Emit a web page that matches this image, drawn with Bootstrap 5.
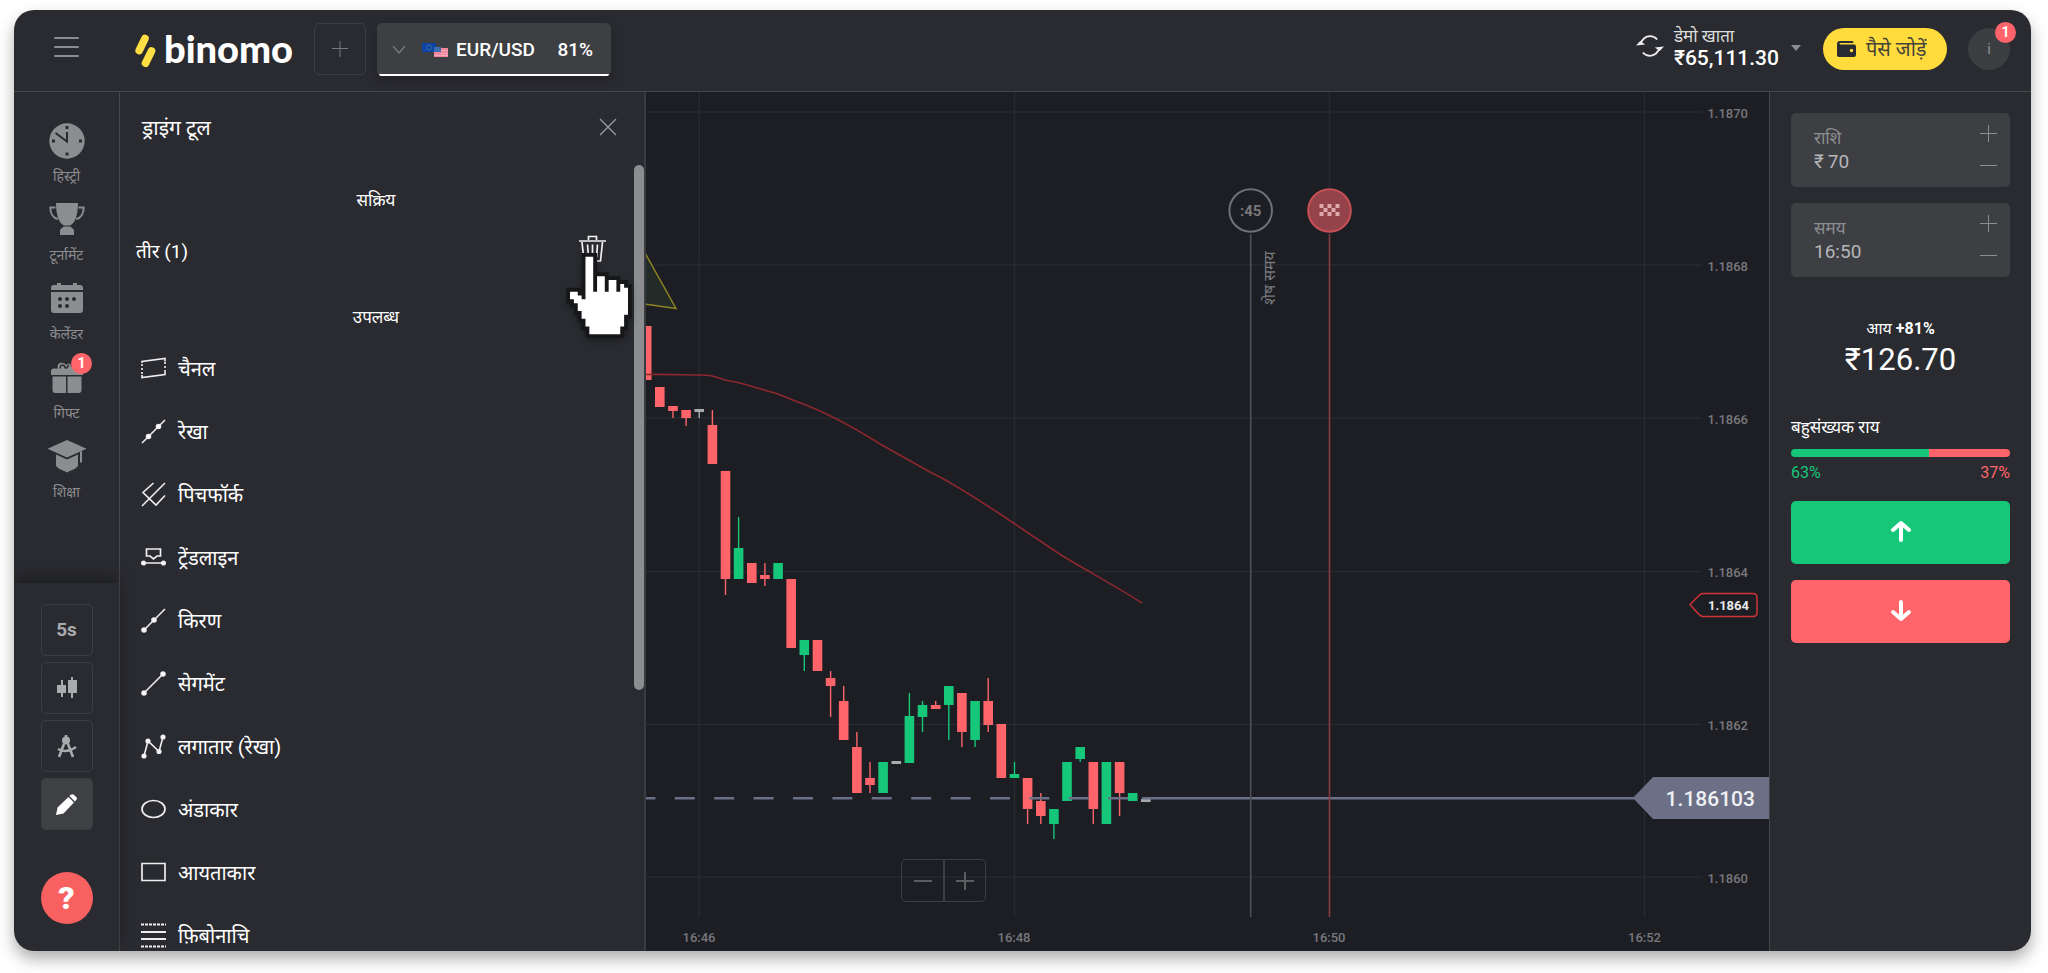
<!DOCTYPE html>
<html lang="hi" data-bs-theme="dark">
<head>
<meta charset="utf-8">
<meta name="viewport" content="width=device-width, initial-scale=1">
<title>Binomo</title>
<link href="https://cdn.jsdelivr.net/npm/bootstrap@5.3.0/dist/css/bootstrap.min.css" rel="stylesheet">
<style>
:root{--panel:#2a2b30;--chart:#1d1e23;--line:#46474b;--field:#3e3f43;--up:#16c77a;--down:#ff646a;--muted:#8c8d91}
body{background:#fff;padding:10px 17px 22px 14px;height:100vh;font-family:Roboto,"Noto Sans","Noto Sans Devanagari",sans-serif;font-size:18px;line-height:24px;color:#fff}
.terminal{height:100%;background:var(--panel);border-radius:20px;overflow:hidden}
.shell-shadow{height:100%;border-radius:20px;box-shadow:0 8px 16px rgba(0,0,0,.32)}
button{font-family:inherit;color:inherit;background:none;border:0;padding:0}
svg{display:block}
.topbar{height:82px;border-bottom:1px solid var(--line);padding:0 21px 0 0}
.rail{width:106px;border-right:1px solid var(--line)}
.menu-btn{width:105px;padding-top:26px;color:var(--muted)}
.wordmark{font-family:Lato,sans-serif;font-weight:900;font-size:38px;line-height:40px;padding:18px 0 0 8px;color:#fff;text-decoration:none}
.square-btn{width:52px;height:52px;border:1px solid #3d3e42;border-radius:5px}
.add-asset{margin:13px 11px 0 21px}
.asset-tab{width:234px;height:53px;margin-top:13px;background:var(--field);border-radius:5px;box-shadow:0 4px 12px rgba(0,0,0,.25);position:relative;font-size:19px;font-weight:500;padding:0 18px 0 15px}
.asset-tab::after{content:"";position:absolute;left:2px;right:2px;bottom:0;height:2px;background:#fff;border-radius:0 0 3px 3px}
.refresh{margin-top:24px}
.account{padding:16px 0 0 10px}
.account svg{margin:19px 22px 0 12px}
.account-name{font-size:17px;line-height:20px;color:#ddd}
.account-sum{font-size:21px;line-height:24px;font-weight:500}
.deposit{width:124px;height:42px;margin:18px 21px 0 0;padding-left:14px;gap:10px;border-radius:21px;background:#ffdb3c;color:#45433a;font-size:20px}
.avatar{width:42px;height:42px;margin-top:18px;border-radius:50%;background:#3d3e42;color:var(--muted);font-size:15px;position:relative}
.counter{position:absolute;width:21px;height:21px;border-radius:50%;background:var(--down);color:#fff;font-size:14px;line-height:21px;font-weight:700;text-align:center}
.avatar .counter{top:-6px;right:-6px}
.work-area{min-height:0}
.rail-link{color:var(--muted);text-decoration:none;height:79px;font-size:14px;line-height:18px;position:relative}
.rail-link svg{height:36px}
.rail-link .counter{top:-7px;left:57px}
.rail-menu{padding-top:31px}
.rail-tools{box-shadow:0 -6px 14px rgba(0,0,0,.3);padding-top:21px;height:368px;gap:6px;color:#aaabae}
.rail-tools .active{background:#3f4044;color:#fff}
.timeframe{font-size:19px;font-weight:700}
.help{width:52px;height:52px;border-radius:50%;background:#f96060;color:#fff;font-size:32px;font-weight:900;margin-top:36px}
.drawing{width:526px;border-right:2px solid #3a3b40;position:relative;overflow:hidden;flex:none}
.drawing h2{font-size:21px;line-height:24px;font-weight:400;margin:0}
.drawing h3{font-size:17px;line-height:24px;font-weight:400;text-align:center;margin:0;padding-right:12px}
.drawing-head{padding:24px 27px 0 22px;height:96px}
.close-btn{margin-top:2px}
.used-row{padding:0 38px 0 16px;height:80px;margin-bottom:13px;font-size:19px}
.trash-wrap{position:relative;margin-top:-6px}
.hand{position:absolute;left:-13px;top:18px;z-index:2;pointer-events:none;filter:drop-shadow(0 3px 3px rgba(0,0,0,.3))}
.tool-item{height:63px;padding-left:21px;gap:12px;font-size:20px;text-align:left}
.thumb{position:absolute;right:0;top:73px;width:10px;height:525px;border-radius:5px;background:var(--muted)}
.plot{background:var(--chart);position:relative;min-width:0}
.plot>svg{width:100%;height:100%}
.plot text{font-family:Roboto,"Noto Sans",sans-serif;fill:#77787c;font-size:13px;font-weight:500}
.plot .tag{fill:#e8e8ea;font-weight:700}
.plot .price{fill:#f0f0f4;font-size:21px}
.plot .left-time{font-size:16px;font-weight:400}
.plot .seconds{font-size:15px;font-weight:700}
.zoomer{position:absolute;left:255px;bottom:49px;border:1px solid #3d3e42;border-radius:5px;color:#5c5d61}
.zoomer button{width:41px;height:41px}
.zoomer button+button{width:42px;border-left:2px solid #3d3e42}
.deal{width:262px;border-left:1px solid var(--line);padding:21px 21px 0 21px;flex:none}
.field{height:74px;background:var(--field);border-radius:5px;padding:11px 13px 13px 23px;color:#b4b5b8}
.field label{display:block;margin-top:2px;font-size:17px;line-height:24px;color:var(--muted)}
.field input{width:110px;background:none;border:0;padding:0;outline:0;color:inherit;font-size:19px;line-height:24px;height:24px;display:block}
.field button{color:var(--muted);width:17px;height:18px}
.income{margin-top:40px;text-align:center;font-size:16px}
.income strong{font-weight:700}
.income .sum{font-size:31px;line-height:38px}
.opinion{margin-top:36px;font-size:17px}
.split-bar{height:8px;border-radius:4px;margin-top:10px;overflow:hidden}
.pct{font-size:16px;line-height:24px;margin-top:4px}
.deal .trade{height:63px;border-radius:5px;width:100%}
.trade+.trade,.pct+.trade{margin-top:16px}
.up-bg{background:var(--up)}.down-bg{background:var(--down)}
.up-fg{color:var(--up)}.down-fg{color:var(--down)}
</style>
</head>
<body>
<div class="shell-shadow">
<div class="terminal d-flex flex-column">
<header class="topbar d-flex align-items-start flex-shrink-0">
  <button class="menu-btn d-flex justify-content-center" aria-label="मेनू">
    <svg width="25" height="22" stroke="currentColor" stroke-width="2" stroke-linecap="round"><path d="M1 2h23M1 11h23M1 20h23"/></svg>
  </button>
  <a href="#" class="d-flex text-decoration-none ms-3" aria-label="binomo">
    <svg width="21" height="34" viewBox="0 0 21 34" class="mt-4" stroke="#ffdf43" stroke-width="7.6" stroke-linecap="round"><path d="M4.2 16.500L10 4.500M10.500 29.200L16.500 17"/></svg>
    <span class="wordmark">binomo</span>
  </a>
  <button class="square-btn add-asset d-flex align-items-center justify-content-center" aria-label="जोड़ें">
    <svg width="18" height="18" stroke="#77787c" stroke-width="1"><path d="M9 1v16M1 8.500h16"/></svg>
  </button>
  <button class="asset-tab d-flex align-items-center">
    <svg width="14" height="9" fill="none" stroke="#77787c" stroke-width="1.400"><path d="M1 1l6 7 6-7"/></svg>
    <svg width="26" height="14" class="ms-3"><path fill="#0b43a5" d="M0 0h14v9H0z"/><path fill="#f0879c" d="M12 5h14v9H12z"/><path stroke="#f6a9b8" d="M19 7.500h7M19 10.500h7M12 12.500h14"/><path fill="#3d6bb0" d="M12 4h7v5h-7z"/><circle cx="7" cy="4.500" r="2.500" fill="none" stroke="#3f6a9a"/></svg>
    <span class="ms-2">EUR/USD</span><span class="ms-auto">81%</span>
  </button>
  <div class="ms-auto d-flex align-items-start">
    <svg width="28" height="24" viewBox="0 0 28 24" class="refresh flex-shrink-0" fill="none" stroke="#ededee" stroke-width="1.800"><path d="M4.500 10.500C5.500 5.500 9.500 2.200 14 2.200c3 0 5.500 1.300 7.200 3.300M23.500 13.500C22.500 18.500 18.500 21.800 14 21.800c-3 0-5.500-1.300-7.200-3.300"/><path fill="#ededee" stroke="none" d="M0 11.500L4.200 7l5 3.500-4.600.6zM28 12.500L23.800 17l-5-3.500 4.600-.6z"/></svg>
    <button class="account d-flex text-start">
      <span><span class="account-name d-block">डेमो खाता</span><span class="account-sum d-block">₹65,111.30</span></span>
      <svg width="10" height="6" fill="#8c8d91"><path d="M0 0h10L5 6z"/></svg>
    </button>
    <button class="deposit d-flex align-items-center">
      <svg width="19" height="16" viewBox="0 0 19 16" fill="#2a2b30"><path d="M3 0h12q1.500 0 1.500 2H3.500q-1 0-1 .8t1 .8H17q2 0 2 2V14q0 2-2 2H2q-2 0-2-2V3Q0 0 3 0z"/><circle cx="14.500" cy="9.500" r="1.700" fill="#ffdb3c"/></svg>
      <span>पैसे जोड़ें</span>
    </button>
    <button class="avatar">i<span class="counter">1</span></button>
  </div>
</header>
<div class="work-area d-flex flex-fill">
  <nav class="rail d-flex flex-column flex-shrink-0 justify-content-between">
    <div class="rail-menu d-flex flex-column">
      <a href="#" class="rail-link d-flex flex-column align-items-center gap-2"><svg width="36" viewBox="0 0 36 36"><circle cx="18" cy="18" r="17.700" fill="#8c8d91"/><path d="M18 9v9.500L6.500 10" stroke="#2a2b30" stroke-width="2" fill="none"/><path fill="#2a2b30" d="M16.500 3h3v3h-3zM16.500 29.500h3v3h-3zM3 16.500h3v3H3zM30 16.500h3v3h-3z"/></svg>हिस्ट्री</a>
      <a href="#" class="rail-link d-flex flex-column align-items-center gap-2"><svg width="36" viewBox="0 0 36 36"><path fill="#8c8d91" d="M7 1h22c0 12-3 20.500-8 22.500h-6C10 21.500 7 13 7 1zM14.500 24.500h7c.5 1.500 3.500 1.500 3.500 5V33H11v-3.500c0-3.500 3-3.500 3.500-5z"/><path d="M6.500 5.500H1.300c0 6 3 10.500 7.500 11.500M29.500 5.500h5.200c0 6-3 10.500-7.500 11.500" fill="none" stroke="#8c8d91" stroke-width="2"/></svg>टूर्नामेंट</a>
      <a href="#" class="rail-link d-flex flex-column align-items-center gap-2"><svg width="36" viewBox="0 0 36 36"><path fill="#8c8d91" d="M5 4h3V2h4v2h12V2h4v2h3q3 0 3 3v2H2V7q0-3 3-3zM2 11h32v18q0 3-3 3H5q-3 0-3-3z"/><g fill="#2a2b30"><circle cx="11" cy="18" r="2"/><circle cx="18" cy="18" r="2"/><circle cx="25" cy="18" r="2"/><circle cx="11" cy="25" r="2"/><circle cx="18" cy="25" r="2"/></g></svg>केलेंडर</a>
      <a href="#" class="rail-link d-flex flex-column align-items-center gap-2"><svg width="36" viewBox="0 0 36 36"><path fill="#8c8d91" d="M2 15V11.500Q2 8.500 5 8.500h4C7 3 13 .5 17.500 5c4-3.500 4 0 6 3.500H31q3 0 3 3V15zM3.500 16.500H17V33H6.500q-3 0-3-3zM18.500 16.500h14V30q0 3-3 3h-11z"/><path d="M11.500 8.500c-1-4 3-4.500 4.500-1.500v1.500M17 8.500l3-3.500" stroke="#2a2b30" stroke-width="1.500" fill="none"/></svg>गिफ्ट<span class="counter">1</span></a>
      <a href="#" class="rail-link d-flex flex-column align-items-center gap-2"><svg width="40" viewBox="0 0 40 36"><path fill="#8c8d91" d="M20 1l19.500 8.700L20 18.500.5 9.700zM9 15.500l11 5 11-5v11.500C28 31 23.500 31 20 33.500 16.500 31 12 31 9 27zM33 13l2-1v11.500h-2z"/></svg>शिक्षा</a>
    </div>
    <div class="rail-tools d-flex flex-column align-items-center">
      <button class="square-btn timeframe">5s</button>
      <button class="square-btn d-flex align-items-center justify-content-center" aria-label="चार्ट प्रकार"><svg width="20" height="22" fill="currentColor"><path d="M4 3h2v5h3v8H6v4H4v-4H0V8h4zM14 0h2v3h4v13h-4v5h-2v-5h-3V3h3z"/></svg></button>
      <button class="square-btn d-flex align-items-center justify-content-center" aria-label="संकेतक"><svg width="20" height="23" fill="none" stroke="currentColor" stroke-width="2.600"><circle cx="9" cy="5.500" r="4" fill="currentColor" stroke="none"/><path d="M9 0v4M7 9L2 22M11 9l5 13M1 14c5 3 12 2 18-2"/></svg></button>
      <button class="square-btn active d-flex align-items-center justify-content-center" aria-label="ड्राइंग"><svg width="21" height="21" fill="currentColor"><path d="M0 21l1.500-7.500L12.500 3l5.500 5.500L7.500 19.500zM13.500 2l1.300-1.200q1.500-1.300 3 0L20.200 3q1.500 1.500 0 3L19 7.500z"/></svg></button>
      <button class="help">?</button>
    </div>
  </nav>

  <section class="drawing">
    <div class="drawing-head d-flex justify-content-between align-items-start">
      <h2>ड्राइंग टूल</h2>
      <button class="close-btn" aria-label="बंद करें"><svg width="18" height="18" stroke="#9a9b9e" stroke-width="1.300"><path d="M1 1l16 16M17 1L1 17"/></svg></button>
    </div>
    <h3>सक्रिय</h3>
    <div class="used-row d-flex align-items-center justify-content-between">
      <span>तीर (1)</span>
      <button class="trash-wrap" aria-label="हटाएँ">
        <svg width="27" height="28" fill="none" stroke="#f2f2f2" stroke-width="1.700"><path d="M0 6h27M9.500 5V1.500h8V5M3 7l2 19h16.500l2-19M8.500 9.500l1 13M13.500 9.500v13M18.500 9.500l-1 13"/></svg>
        <svg class="hand" width="66" height="85" viewBox="0 0 17 22"><path fill="#fff" stroke="#161719" stroke-width="2" paint-order="stroke" d="M5 1H7V10H8V6H10V10H11V7H13V10H14V8H15V9H16V16H15V19H14V21H6V19H5V17H4V15H3V13H2V12H1V10H3V11H4V12H5Z"/></svg>
      </button>
    </div>
    <h3>उपलब्ध</h3>
    <div class="d-flex flex-column pt-2">
      <button class="tool-item d-flex align-items-center"><svg width="25" height="25" fill="none" stroke="#eee" stroke-width="1.600"><path d="M1 7V5.500L24 2.500v3M1 19v2.500l23-3V16"/><path d="M1 8v11M24 6v11" stroke-dasharray="2 2"/></svg>चैनल</button>
      <button class="tool-item d-flex align-items-center"><svg width="25" height="25" fill="#fff" stroke="#eee" stroke-width="1.600"><path d="M1 24L24 1"/><circle cx="7.500" cy="17.500" r="2"/><circle cx="17.500" cy="7.500" r="2"/></svg>रेखा</button>
      <button class="tool-item d-flex align-items-center"><svg width="25" height="25" fill="none" stroke="#eee" stroke-width="1.600"><path d="M1 24L24 1M12.500 1L2 10.500l13 12.500 9-9.500"/></svg>पिचफॉर्क</button>
      <button class="tool-item d-flex align-items-center"><svg width="25" height="25" fill="none" stroke="#eee" stroke-width="1.700"><path d="M5.500 4h14v7h-3.500l-3.500 3-3.500-3H5.500zM2 18h21"/><g fill="#fff"><circle cx="2.500" cy="18" r="1.700"/><circle cx="22.500" cy="18" r="1.700"/></g></svg>ट्रेंडलाइन</button>
      <button class="tool-item d-flex align-items-center"><svg width="25" height="25" fill="#fff" stroke="#eee" stroke-width="1.600"><path d="M3 22L24 1"/><circle cx="3" cy="22" r="2"/><circle cx="13" cy="12" r="2"/></svg>किरण</button>
      <button class="tool-item d-flex align-items-center"><svg width="25" height="25" fill="#fff" stroke="#eee" stroke-width="1.600"><path d="M3 22L22 3"/><circle cx="3" cy="22" r="2"/><circle cx="22" cy="3" r="2"/></svg>सेगमेंट</button>
      <button class="tool-item d-flex align-items-center"><svg width="25" height="25" fill="none" stroke="#eee" stroke-width="1.600"><path d="M3 22L7 7l11 10.500L22 3"/><g fill="#fff"><circle cx="3" cy="22" r="1.800"/><circle cx="7" cy="7" r="1.800"/><circle cx="18" cy="17.500" r="1.800"/><circle cx="22" cy="3" r="1.800"/></g></svg>लगातार (रेखा)</button>
      <button class="tool-item d-flex align-items-center"><svg width="25" height="25" fill="none" stroke="#eee" stroke-width="1.700"><ellipse cx="12.500" cy="12" rx="11.500" ry="8.500"/></svg>अंडाकार</button>
      <button class="tool-item d-flex align-items-center"><svg width="25" height="25" fill="none" stroke="#eee" stroke-width="1.700"><path d="M1 3.500h23v17H1z"/></svg>आयताकार</button>
      <button class="tool-item d-flex align-items-center"><svg width="25" height="25" fill="none" stroke="#eee" stroke-width="1.800"><path d="M0 9h25M0 16h25"/><path d="M0 1.500h25M0 23.500h25" stroke-dasharray="3 1"/></svg>फ़िबोनाचि</button>
    </div>
    <div class="thumb"></div>
  </section>

  <main class="plot flex-fill">
    <svg viewBox="646 92 1123 859" preserveAspectRatio="xMaxYMid slice">
      <path stroke="#292a2f" stroke-width="1.500" d="M699.300 92V917M1014.500 92V917M1329.500 92V917M1644.500 92V917M646 112H1702M646 265H1702M646 418H1702M646 571.500H1702M646 724.500H1702M646 877H1702"/>
      <path fill="#222b28" stroke="#8f8424" stroke-width="1.500" d="M620 203L645 253l31 55.500-31-4.500-25-2z"/>
      <g id="candles"></g>
      <path fill="none" stroke="#8a282e" stroke-width="1.600" d="M646 374.500C665 374 685 375 699 375c14 0 18 2 26 5l15 3 38 11c10 4 14 6 20 8 30 11 60 28 82 42l50 28c25 12 52 30 76 46l55 37c30 18 56 32 81 48"/>
      <path stroke="#6b7088" stroke-width="2.400" stroke-dasharray="20 19.400" d="M635.400 798.300H1142"/>
      <path stroke="#6b7088" stroke-width="2.400" d="M1142 798.300H1640"/>
      <path stroke="#4e4f53" stroke-width="1.600" d="M1250.700 234V917"/>
      <path stroke="#843b42" stroke-width="1.600" d="M1329.500 234V917"/>
      <circle cx="1250.700" cy="210.500" r="21.300" fill="#1d1e23" stroke="#717276" stroke-width="2"/>
      <circle cx="1329.500" cy="210.500" r="21.300" fill="#94434a" stroke="#c94f57" stroke-width="2"/>
      <path fill="#dba9ad" d="M1319.500 204h4v4h-4zM1327.500 204h4v4h-4zM1335.500 204h4v4h-4zM1323.500 208h4v4h-4zM1331.500 208h4v4h-4zM1319.500 212h4v4h-4zM1327.500 212h4v4h-4zM1335.500 212h4v4h-4z"/>
      <text class="seconds" x="1250.700" y="216" text-anchor="middle">:45</text>
      <text class="left-time" text-anchor="middle" transform="translate(1275 278) rotate(-90)">शेष समय</text>
      <g text-anchor="end">
        <text x="1748" y="118">1.1870</text><text x="1748" y="271">1.1868</text><text x="1748" y="424">1.1866</text><text x="1748" y="577">1.1864</text><text x="1748" y="730">1.1862</text><text x="1748" y="883">1.1860</text>
      </g>
      <g text-anchor="middle">
        <text x="699" y="942">16:46</text><text x="1014" y="942">16:48</text><text x="1329" y="942">16:50</text><text x="1644.500" y="942">16:52</text>
      </g>
      <path fill="#1d1e23" stroke="#cf3438" stroke-width="1.500" d="M1690 604.500l9-9q2-2 4-2h50q4 0 4 4v15q0 4-4 4h-50q-2 0-4-2z"/>
      <text class="tag" x="1749" y="610" text-anchor="end">1.1864</text>
      <path fill="#6b7086" d="M1633 798l20-21h116v42h-116z"/>
      <text class="price" x="1755" y="806" text-anchor="end">1.186103</text>
    </svg>
    <div class="zoomer d-flex">
      <button class="d-flex align-items-center justify-content-center" aria-label="ज़ूम आउट"><svg width="18" height="18" stroke="currentColor" stroke-width="2"><path d="M0 9h18"/></svg></button>
      <button class="d-flex align-items-center justify-content-center" aria-label="ज़ूम इन"><svg width="18" height="18" stroke="currentColor" stroke-width="2"><path d="M0 9h18M9 0v18"/></svg></button>
    </div>
  </main>

  <aside class="deal">
    <div class="field d-flex justify-content-between">
      <div><label for="sum">राशि</label><input id="sum" value="₹&#8201;70"></div>
      <div class="d-flex flex-column justify-content-between">
        <button aria-label="राशि बढ़ाएँ"><svg width="17" height="17" stroke="currentColor"><path d="M0 8.500h17M8.500 0v17"/></svg></button>
        <button aria-label="राशि घटाएँ"><svg width="17" height="17" stroke="currentColor"><path d="M0 8.500h17"/></svg></button>
      </div>
    </div>
    <div class="field d-flex justify-content-between mt-3">
      <div><label for="time">समय</label><input id="time" value="16:50"></div>
      <div class="d-flex flex-column justify-content-between">
        <button aria-label="समय बढ़ाएँ"><svg width="17" height="17" stroke="currentColor"><path d="M0 8.500h17M8.500 0v17"/></svg></button>
        <button aria-label="समय घटाएँ"><svg width="17" height="17" stroke="currentColor"><path d="M0 8.500h17"/></svg></button>
      </div>
    </div>
    <div class="income">आय <strong>+81%</strong><div class="sum">₹126.70</div></div>
    <div class="opinion">बहुसंख्यक राय</div>
    <div class="split-bar d-flex"><div class="up-bg" style="width:63%"></div><div class="down-bg flex-fill"></div></div>
    <div class="pct d-flex justify-content-between"><span class="up-fg">63%</span><span class="down-fg">37%</span></div>
    <button class="trade up-bg d-flex align-items-center justify-content-center" aria-label="ऊपर"><svg width="22" height="24" fill="none" stroke="#fff" stroke-width="4" stroke-linecap="round" stroke-linejoin="round"><path d="M11 19V3M3 9l8-7 8 7"/></svg></button>
    <button class="trade down-bg d-flex align-items-center justify-content-center" aria-label="नीचे"><svg width="22" height="24" fill="none" stroke="#fff" stroke-width="4" stroke-linecap="round" stroke-linejoin="round"><path d="M11 2v16M3 12l8 7 8-7"/></svg></button>
  </aside>
</div>
</div>
</div>
<script src="https://cdn.jsdelivr.net/npm/bootstrap@5.3.0/dist/js/bootstrap.bundle.min.js"></script>
<script>
// candle: [colour, wick top, body top, body bottom, wick bottom], one every 13.135 units
const candles = [
 ['r',326,326,380,380],['r',387,387,407,407],['r',406,406,411,418],['r',410,410,418,426],['w',409,409,412,418],
 ['r',410,425,464,464],['r',471,471,579,595],['g',517,548,579,579],['r',563,563,583,583],['r',563,575,579,586],
 ['g',563,563,579,579],['r',579,579,648,648],['g',640,640,655,671],['r',640,640,671,671],['r',671,678,686,717],
 ['r',686,701,740,740],['r',732,747,793,793],['r',762,778,785,793],['g',762,762,793,793],['w',761,761,764,764],
 ['g',693,716,763,763],['g',701,705,717,732],['r',701,705,709,709],['g',686,686,705,740],['r',693,693,732,747],
 ['g',701,701,740,747],['r',678,701,725,732],['r',724,724,778,778],['g',762,774,778,778],['r',778,778,809,824],
 ['r',793,801,816,824],['g',809,809,824,839],['g',762,762,801,801],['g',747,747,759,762],['r',762,762,809,824],
 ['g',762,762,824,824],['r',762,762,793,816],['g',793,793,801,801],['w',799,799,802,802]];
const fill = {r:'#ff646a', g:'#16c77a', w:'#a9aaac'};
document.getElementById('candles').innerHTML = candles.map(([c,t,a,b,w],i)=>{
  const x = 646.7 + 13.135*i;
  return `<path fill="${fill[c]}" d="M${(x-4.8).toFixed(1)} ${a}h9.600V${b}h-9.600z"/><path stroke="${fill[c]}" stroke-width="1.400" d="M${x.toFixed(1)} ${t}V${w}"/>`;
}).join('');
</script>
</body>
</html>
